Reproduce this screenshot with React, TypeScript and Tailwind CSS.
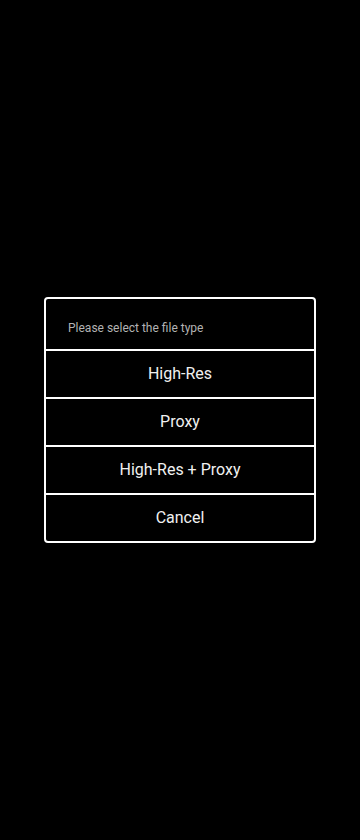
import React from "react";

export default function App() {
  const options = ["High-Res", "Proxy", "High-Res + Proxy", "Cancel"];
  return (
    <div
      className="w-[360px] h-[840px] bg-black flex flex-col items-center"
      style={{ fontFamily: "Roboto, 'Noto Sans', sans-serif" }}
    >
      <div className="mt-[297px] w-[272px] border-2 border-white rounded-[4px] flex flex-col">
        <div className="h-[50px] flex items-center pt-[8px] pl-[22px] text-[12px] text-[#b3b3b3]">
          Please select the file type
        </div>
        {options.map((o) => (
          <div
            key={o}
            className="h-[48px] border-t-2 border-white flex items-center justify-center text-[16px] text-[#f0f0f0]"
          >
            {o}
          </div>
        ))}
      </div>
    </div>
  );
}
